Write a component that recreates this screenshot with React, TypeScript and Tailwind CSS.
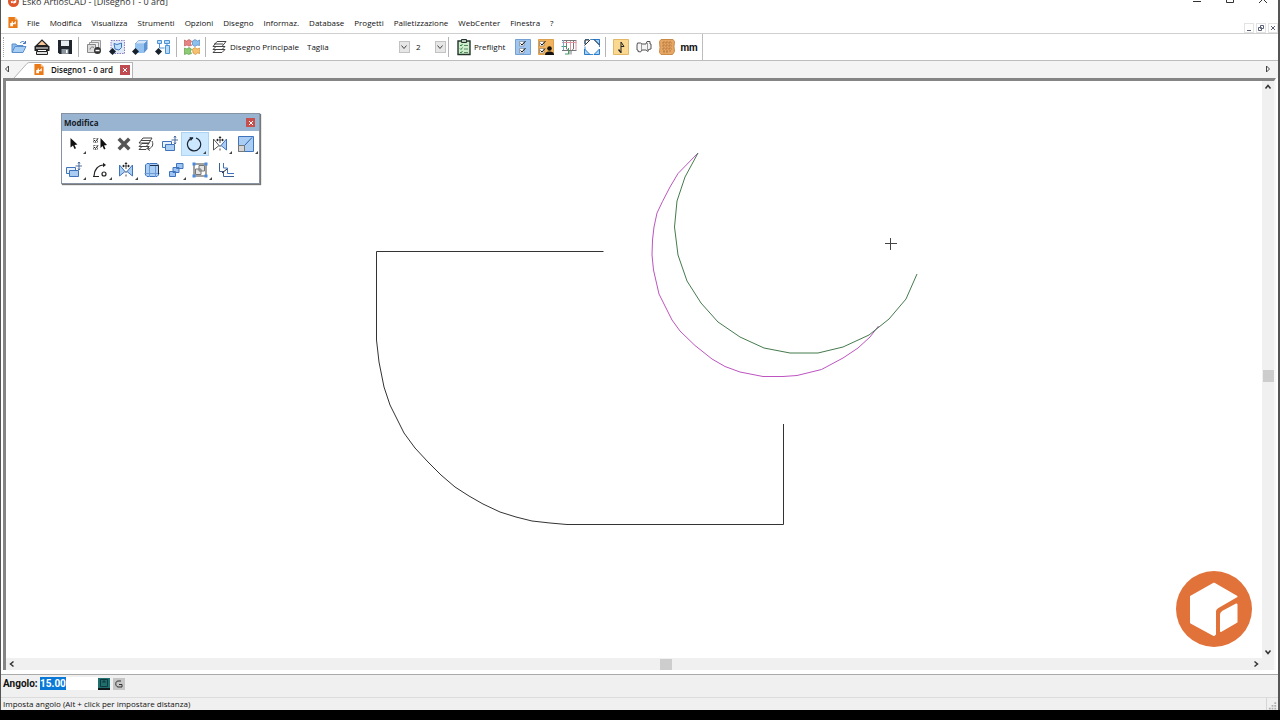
import { useEffect, useRef, type ReactNode } from "react";

function Icon({ children, className = "size-4" }: { children: ReactNode; className?: string }) {
  return (
    <svg viewBox="0 0 16 16" className={`${className} shrink-0 fill-none`} aria-hidden="true">
      {children}
    </svg>
  );
}

const BLUE = "#3f74bd";
const PALE = "#a9cdf3";

function AppMark({ className }: { className: string }) {
  return (
    <svg viewBox="0 0 10 12" className={className} aria-hidden="true">
      <path d="M0 0h7l3 3v9H0z" fill="#ea7a18" />
      <path d="M7 0l3 3H7z" fill="#f8c48f" />
      <path d="M2 6.500h1.500V5H5v1.500h1L8 4v4H6.500V6.800L5 8.500V10H2z" fill="#fff" />
    </svg>
  );
}

const icons = {
  open: (
    <>
      <path d="M1 13V5h4l1 1.500h6V8" fill="#8fbcea" stroke="#5a8fcb" />
      <path d="M1 13.500l3-6h11l-3 6z" fill="#a6cdf4" stroke="#5a8fcb" />
      <path d="M9 4c2-2 4-2 5 0m.5-2v2.500H12" stroke={BLUE} />
    </>
  ),
  print: (
    <>
      <path d="M2.500 6.500L8 1l5.500 5.500z" fill="#f7c79a" stroke="#222" strokeWidth="1.200" />
      <path d="M.5 7h15v5H.5z" fill="#222" />
      <path d="M2 9h12M4 11.500h8" stroke="#fff" />
      <path d="M2.500 12.500h11v3h-11z" fill="#ddd" stroke="#222" />
    </>
  ),
  save: (
    <>
      <path d="M1 1h14v14H2.500L1 13.500z" fill="#20262e" />
      <path d="M4 1.500h8V7H4z" fill="#e8edf2" />
      <path d="M4.500 10h7v5h-7z" fill="#8c96a0" />
      <path d="M9 11h1.500v3H9z" fill="#fff" />
    </>
  ),
  plotSet: (
    <>
      <path d="M5.500 1.500h9v8h-9z" fill="#e6e6e6" stroke="#999" />
      <path d="M3.500 3.500h9v8h-9z" fill="#eee" stroke="#999" />
      <path d="M1.500 5.500h8v8h-8z" fill="#ddd" stroke="#888" />
      <path d="M4 10.500a2.500 2.500 0 0 1 4-2" stroke="#777" />
      <circle cx="11.500" cy="11.500" r="3.500" fill="#333" />
      <path d="M9.500 11.500h4" stroke="#fff" strokeWidth="1.500" />
    </>
  ),
  copyDesign: (
    <>
      <path d="M2 1.500h13.500v13H2z" fill="#dfe9f8" stroke="#8a7fc0" strokeDasharray="1.500 1" />
      <path d="M5 4.500l3 1L12.500 4v4.500L10 11l-4-1z" fill="#bfe0fb" stroke={BLUE} />
      <path d="M3.500 9L7 12.500 3.500 16 0 12.500z" fill="#17202b" />
    </>
  ),
  cube: (
    <>
      <path d="M3 5l3.500-3.500H15.500L12 5z" fill="#d4e7fb" stroke="#6b9bd3" strokeWidth=".7" />
      <path d="M12 5l3.500-3.500V10L12 14z" fill="#5d93d1" />
      <path d="M3 5h9v9H3z" fill="#94c2f0" />
      <path d="M3.500 9L7 12.500 3.500 16 0 12.500z" fill="#17202b" />
    </>
  ),
  hierarchy: (
    <>
      <path d="M2.500 1.500h4v3h-4zM9.500 1.500h5v3h-5zM10.500 6.500h4v8h-4z" fill="#b8dafa" stroke="#4c93d6" />
      <path d="M4.500 5v4h5M12 5v2" stroke="#4c93d6" />
      <path d="M3.500 9L7 12.500 3.500 16 0 12.500z" fill="#17202b" />
    </>
  ),
  puzzle: (
    <>
      <path d="M0 1l2.500 1L5 .5 7.500 2 6.500 4.500l1 2-3 .5L3 6 .5 7z" fill="#e58484" stroke="#b84d4d" strokeWidth=".6" />
      <path d="M8.500 2L11 .5l2.500 1.500L16 1l-.5 5.500L13 6l-2 1.500L8.500 6z" fill="#8ec0ee" stroke="#4077b3" strokeWidth=".6" />
      <path d="M.5 9L3 10l2-1.500L7.500 10l-1 2.500 1 2-3 1L3 14.500.5 15.500z" fill="#8dcb74" stroke="#4d8f39" strokeWidth=".6" />
      <path d="M8.500 10l2.500-1.500 2 1.500 2.500-1 .5 5.500-2.500-.5-2 1.500-2.500-1.500z" fill="#f6c170" stroke="#c78123" strokeWidth=".6" />
    </>
  ),
  layers: (
    <g fill="#fff" stroke="#444">
      <path d="M2 13.500l3-3h9l-3 3zM2 10.500l3-3h9l-3 3zM2 7.500l4-5h9l-4 5z" />
      <path d="M3 5h9" />
    </g>
  ),
  preflight: (
    <>
      <path d="M2 2h12v13.500H2z" fill="#cfeccd" stroke="#23352a" strokeWidth="1.400" />
      <path d="M5.500.5h5v3h-5z" fill="#b9c9bd" stroke="#23352a" />
      <path d="M4 6l1 1 1.500-2M4 9.500l1 1L6.500 8.500M4 13l1 1 1.500-2" stroke="#2c8a44" />
      <path d="M8 6.500h4M8 10h4M8 13.500h4" stroke="#5a8a64" />
    </>
  ),
  checks: (
    <>
      <path d="M.5.5h15v15H.5z" fill="#9fc5f1" stroke="#75a0d3" />
      <path d="M4.500 2.500H9V7H4.500zM4.500 9.500H9V14H4.500z" fill="#fff" stroke="#7b8794" strokeWidth=".7" />
      <path d="M5.500 4.500l1.500 1.500 3.500-4M5.500 11.500L7 13l3.500-4" stroke="#111" />
    </>
  ),
  userChecks: (
    <>
      <path d="M.5.5h15v15H.5z" fill="#f2b35e" stroke="#dda04d" />
      <path d="M1.500 2.500H6V7H1.500zM1.500 9.500H6V14H1.500z" fill="#fff" stroke="#8d7a5c" strokeWidth=".7" />
      <path d="M2.500 4.500L4 6l3.500-4M2.500 11.500L4 13l3-3.500" stroke="#111" />
      <circle cx="11.500" cy="9.500" r="2.300" fill="#111" />
      <path d="M7 16c0-3 2.500-3.500 4.500-3.500s4.500.5 4.500 3.500z" fill="#111" />
    </>
  ),
  grid: (
    <>
      <path d="M1 1.500h14.500M5.500 1v9L8 12v3.500M12.500 1v9L10 12v3.500M1 11.500h14.500" stroke="#777" />
      <path d="M1 3.500h14.500M9.500 2v9M15 2v9" stroke="#dc96a2" />
      <path d="M.5 7.500h5M7.500 9v6H4" stroke="#3f9f67" />
      <path d="M2.500 1v10" stroke="#7ba6d8" />
    </>
  ),
  fit: (
    <>
      <path d="M1 .5h14.500v15H1z" stroke="#3b8ad8" strokeDasharray="4 2" />
      <path d="M10 .5h5.500V6zM.5 10v5.500H6zM15.500 10v5.500H10z" fill="#a8d3fa" stroke="#2d7bc8" />
      <path d="M.5 6.500l6-6M1 1h4M1 1v4M10 .5L15.500 6" stroke="#333" />
    </>
  ),
  note: (
    <>
      <path d="M.5.5h15v15H.5z" fill="#fbd890" stroke="#e2b765" />
      <path d="M8 14V3l3 4.500H8" stroke="#222" />
      <path d="M5.500 10.500L8 13.500" stroke="#222" strokeWidth="1.400" />
    </>
  ),
  carton: (
    <>
      <path d="M1.500 4h3L6 5h4l1-2.500h3V5h1v5l-2.500.5-.5 2-2-1.500H6L4.500 13 2 12.500V11H1V6z" stroke="#555" fill="#f6f6f6" />
      <path d="M5.500 5v6M11.500 4v7" stroke="#999" />
    </>
  ),
  board: (
    <>
      <path d="M2 .5h12l1.500 2-.5 5 .5 5-2 3H2l-1.500-2 .5-5-.5-6z" fill="#e5a763" stroke="#c98a48" />
      <path d="M3 4h10M3 7h10M3 10h10M4 13h6M5 2v11M8 2v11M11 2v11" stroke="#a96b35" strokeWidth=".7" strokeDasharray="2 1" />
    </>
  ),
  arrow: <path d="M4.500 2v9.500L7 9.500 8.500 13l1.500-.8-1.500-3.200 3-.5z" fill="#111" />,
  selectList: (
    <>
      <path d="M1.500 2.500h4v4h-4zM1.500 9.500h4v4h-4z" stroke="#777" strokeDasharray="2 1" />
      <path d="M2 4l1.500 1.500L6 2.500M2 11l1.500 1.500L6 9.500" stroke="#222" />
      <path d="M8.500 2v10l2-2 1.500 3.500 1.500-.7L12 9.500l3-.5z" fill="#111" />
    </>
  ),
  cross: <path d="M4 1.500L8 5.500l4-4L14.500 4l-4 4 4 4-2.500 2.500-4-4-4 4L1.500 12l4-4-4-4z" fill="#555" />,
  layerEdit: (
    <>
      <g fill="#fff" stroke="#444">
        <path d="M1 13.500l3-3h7l-3 3zM1 10.500l3-3h7l-3 3zM1 7l4-5h9l-3 5z" />
        <path d="M3 4.500h9" />
      </g>
      <path d="M14 5c2 4 0 7-4 8M11 10.500L9.500 13l2.500 1.500" stroke="#444" />
    </>
  ),
  move: (
    <>
      <path d="M.5 5.500h9v6h-9z" fill="#e8f1fc" stroke={BLUE} />
      <path d="M3.500 8.500h9v6h-9z" fill={PALE} stroke={BLUE} />
      <path d="M13 0v8M9.500 4H16M12 1.500L13 0l1 1.500M12 6.500L13 8l1-1.500" stroke="#3b5f96" strokeWidth=".9" />
    </>
  ),
  rotate: (
    <>
      <path d="M7 1.800A6.600 6.600 0 1 0 10 2" stroke="#1c2430" strokeWidth="1.200" />
      <path d="M3.500 1l4 .8L4.800 5z" fill="#1c2430" />
    </>
  ),
  mirror: (
    <>
      <path d="M1.500 3v11L7 9.500zM14.500 3v11L9 9.500z" fill={PALE} stroke={BLUE} />
      <path d="M8 1v6M5 4h6M8 9v2M8 12.500v2" stroke="#222" strokeWidth=".8" />
      <path d="M8 0L6.500 2h3zM4 4l2-1.500v3zM12 4l-2-1.500v3z" fill="#222" />
    </>
  ),
  mirrorWhite: (
    <>
      <path d="M1.500 3v11L7 9.500z" fill="#fff" stroke="#555" />
      <path d="M14.500 3v11L9 9.500z" fill={PALE} stroke={BLUE} />
      <path d="M8 1v6M5 4h6M8 9v2M8 12.500v2" stroke="#222" strokeWidth=".8" />
      <path d="M8 0L6.500 2h3zM4 4l2-1.500v3zM12 4l-2-1.500v3z" fill="#222" />
    </>
  ),
  scale: (
    <>
      <path d="M.5.5h15v15H.5z" fill={PALE} stroke={BLUE} />
      <path d="M.5 9.500h6v6h-6z" fill="#d4d4d4" stroke="#777" />
      <path d="M6.500 9.500l7.500-8" stroke="#2f65b0" />
    </>
  ),
  arc: (
    <>
      <path d="M2 14C2 8 6 3 12 3" stroke="#222" strokeWidth="1.200" />
      <path d="M11 .8L14 3l-3 2.200z" fill="#222" />
      <circle cx="12" cy="12" r="2" stroke="#222" strokeWidth="1.200" />
      <path d="M1 14.500h6" stroke="#222" />
    </>
  ),
  trim: (
    <>
      <path d="M3 1.500h10L14.500 3v10L13 14.500H3L1.500 13V3z" fill={PALE} stroke={BLUE} />
      <path d="M5.500 1v14M11.500 4v11M.5 11.500h15" stroke="#6d9bd6" />
      <path d="M6 3.500h8.500V12" stroke="#20304c" />
    </>
  ),
  copies: (
    <g fill="#9cc5f3" stroke={BLUE}>
      <path d="M8.500 1.500H15v5H8.500zM5 5.500h6v5H5zM1.500 9.500h6v5h-6z" />
    </g>
  ),
  group: (
    <>
      <path d="M2 2h12v12H2z" stroke="#444" />
      <path d="M7 3.500h5.500V9H7zM3.500 7H9v5.500H3.500z" fill="#e4e4e4" stroke="#777" />
      <path d="M.5.5h3v3h-3zM12.500.5h3v3h-3zM.5 12.500h3v3h-3zM12.500 12.500h3v3h-3z" fill="#4a8ae0" />
    </>
  ),
  offset: (
    <>
      <path d="M1.500 1v8.500h4v5H16" stroke="#3c5f94" />
      <path d="M5.500 1v5h4v5.500H16" stroke={BLUE} />
      <path d="M4 11l5-4" stroke="#222" />
    </>
  ),
};

type IconName = keyof typeof icons;

function Tool({ name, label }: { name: IconName; label: string }) {
  return (
    <button type="button" aria-label={label} className="flex h-6 w-[23px] shrink-0 items-center justify-center">
      <Icon>{icons[name]}</Icon>
    </button>
  );
}

function Separator() {
  return <div className="mx-0.5 h-5 w-0.5 shrink-0 border-l border-[#b4b4b4]" />;
}

function Combo({ label, value, className }: { label: string; value: string; className: string }) {
  return (
    <div className={`relative flex h-4 items-center ${className}`}>
      <select aria-label={label} defaultValue={value} className="h-4 w-full appearance-none bg-white text-[8px] leading-4 outline-none">
        <option>{value}</option>
      </select>
      <span className="pointer-events-none absolute right-0 flex h-3 w-[11px] items-center justify-center border border-[#c2c2c2] bg-[#e6e6e6]">
        <svg viewBox="0 0 8 8" className="size-2 fill-none stroke-[#444]" aria-hidden="true">
          <path d="M1.500 2.500L4 5.500l2.500-3" />
        </svg>
      </span>
    </div>
  );
}

const menus = ["File", "Modifica", "Visualizza", "Strumenti", "Opzioni", "Disegno", "Informaz.", "Database", "Progetti", "Palletizzazione", "WebCenter", "Finestra", "?"];

type PaletteTool = { name: IconName; label: string; more?: boolean; active?: boolean; width: string };

const paletteRows: PaletteTool[][] = [
  [
    { name: "arrow", label: "Seleziona", more: true, width: "w-[26px]" },
    { name: "selectList", label: "Selezione multipla", width: "w-[24px]" },
    { name: "cross", label: "Elimina", width: "w-[22px]" },
    { name: "layerEdit", label: "Livelli", width: "w-[24px]" },
    { name: "move", label: "Sposta", width: "w-[24px]" },
    { name: "rotate", label: "Ruota", more: true, active: true, width: "w-[26px]" },
    { name: "mirrorWhite", label: "Specchio", more: true, width: "w-[26px]" },
    { name: "scale", label: "Scala", more: true, width: "w-[26px]" },
  ],
  [
    { name: "move", label: "Copia e sposta", more: true, width: "w-[26px]" },
    { name: "arc", label: "Copia e ruota", more: true, width: "w-[26px]" },
    { name: "mirror", label: "Copia e specchia", more: true, width: "w-[26px]" },
    { name: "trim", label: "Ritaglia", width: "w-[24px]" },
    { name: "copies", label: "Copie multiple", more: true, width: "w-[24px]" },
    { name: "group", label: "Gruppo", more: true, width: "w-[26px]" },
    { name: "offset", label: "Offset", width: "w-[26px]" },
  ],
];

function Palette() {
  return (
    <section aria-label="Modifica" className="absolute left-[55px] top-8 w-[199px] border border-[#8793a3] bg-white shadow-[1px_1px_1px_#777]">
      <header className="flex h-[17px] items-center justify-between bg-[#99b4d1] pl-0.5 pr-1">
        <h2 className="text-[8px] font-bold leading-4 text-[#141c28]">Modifica</h2>
        <button type="button" aria-label="Chiudi Modifica" className="flex size-[9px] items-center justify-center bg-[#c7504f]">
          <svg viewBox="0 0 8 8" className="size-2 stroke-white" aria-hidden="true">
            <path d="M2 2l4 4M6 2L2 6" />
          </svg>
        </button>
      </header>
      {paletteRows.map((row, i) => (
        <div key={i} className="flex h-[26px] items-center">
          {row.map((t) => (
            <button
              key={t.label}
              type="button"
              aria-label={t.label}
              className={`relative flex h-[22px] shrink-0 items-center pl-1 ${t.width} ${t.active ? "bg-[#cce8ff] outline outline-[#a9d4f5]" : ""}`}
            >
              <Icon>{icons[t.name]}</Icon>
              {t.more && (
                <svg viewBox="0 0 4 4" className="absolute bottom-px right-0.5 size-[3px] fill-[#444]" aria-hidden="true">
                  <path d="M4 0v4H0z" />
                </svg>
              )}
            </button>
          ))}
        </div>
      ))}
    </section>
  );
}

function Drawing() {
  return (
    <svg className="absolute inset-0 size-full fill-none" role="img" aria-label="Disegno1">
      <g transform="translate(-6 -81)">
        <path
          d="M603.500 251.500H376.500V340L379 362 384 387 390 405 398 421 404 433 415 448 428 462 441 475 455 487 469 496 483 504 500 512 516 517 532 521 550 523 567 524.500H783.500V424"
          stroke="#333"
        />
        <path
          d="M698 153L678 173.500 670 187 662.500 201.500 657 213 654 227 652.500 240 652 255 653.500 270 659 294 672 320 680 331 695 345.500 712 359 725 366.500 740 372 763 376.500 783 376.500 797 375.500 821.500 369.500 843 358 858 348 870 337 878.500 326"
          stroke="#bd54c0"
        />
        <path
          d="M698 153l-13 24-8 24-2.500 26 3.500 28 9 26 14 22 17 19 22 15 24 11 26 5h28l25-6 26-12 20-16 17-20 11-25"
          stroke="#457a4d"
        />
        <path d="M885 243.500h12M890.500 238v12" stroke="#444" />
      </g>
    </svg>
  );
}

function Logo() {
  return (
    <svg viewBox="0 0 76 76" className="absolute bottom-[11px] right-2.5 size-[76px]" role="img" aria-label="Logo">
      <circle cx="38" cy="38" r="38" fill="#e0723a" />
      <g fill="#fff" stroke="#fff" strokeWidth="2" strokeLinejoin="round">
        <path d="M38 12.700L60.500 25.500 41.500 36.500q-2.500 1.500-2.500 4V63L38 64 15 51.500V25.500z" />
        <path d="M60.500 33.500v17.500L45 60V43.500q0-1.500 1.500-2.500z" />
      </g>
    </svg>
  );
}

const chevron = "size-2 fill-none stroke-[#333] stroke-[1.5]";

export default function App() {
  const angle = useRef<HTMLInputElement>(null);
  useEffect(() => {
    angle.current?.focus();
    angle.current?.select();
  }, []);

  return (
    <div className="flex h-screen flex-col bg-black font-['Open_Sans','Noto_Sans',sans-serif] text-[8px] text-[#111]">
      <div className="flex min-h-0 flex-1 flex-col border-l border-r-2 border-[#555] bg-white">
        <header className="flex h-3 shrink-0 items-start justify-between overflow-hidden pl-[7px]">
          <div className="-mt-1 flex items-start gap-[3px]">
            <svg viewBox="0 0 12 12" className="size-[11px]" aria-hidden="true">
              <circle cx="6" cy="6" r="6" fill="#e0562b" />
              <path d="M3 6l2-1v1.500L9 4v3L6 8.500V7L3.500 8z" fill="#fff" />
            </svg>
            <h1 className="text-[9px] leading-3 text-[#333]">Esko ArtiosCAD - [Disegno1 - 0 ard]</h1>
          </div>
          <div className="-mt-[5px] flex items-start gap-[21px] pr-[9px]">
            {["M2 6.500h8", "M2.500.500h7v7h-7z", "M2 0l8 8M10 0L2 8"].map((d, i) => (
              <button key={d} type="button" aria-label={["Riduci", "Ingrandisci", "Chiudi"][i]} className="flex">
                <svg viewBox="0 0 12 9" className="h-[9px] w-3 fill-none stroke-[#333]" aria-hidden="true">
                  <path d={d} />
                </svg>
              </button>
            ))}
          </div>
        </header>

        <nav className="flex h-[22px] shrink-0 items-center justify-between border-b border-[#cfcfcf] pl-[7px]">
          <div className="flex items-center">
            <AppMark className="h-[11px] w-2.5" />
            <div className="flex gap-2.5 pl-[9px]">
              {menus.map((m) => (
                <button key={m} type="button" className="leading-4">
                  {m}
                </button>
              ))}
            </div>
          </div>
          <div className="flex gap-0.5 self-end">
            {["M2 6.500h4", "M3.500 1.500h3v3h-3zM1.500 3.500h3v3h-3z", "M2 2l4 4M6 2L2 6"].map((d, i) => (
              <button key={d} type="button" aria-label={["Riduci finestra", "Ripristina finestra", "Chiudi finestra"][i]} className="flex size-[10px] items-center justify-center border border-[#e3e3e3]">
                <svg viewBox="0 0 8 8" className="size-2 fill-none stroke-[#596075]" aria-hidden="true">
                  <path d={d} />
                </svg>
              </button>
            ))}
          </div>
        </nav>

        <div className="flex h-[27px] shrink-0 border-b border-[#bdbdbd]">
          <div role="toolbar" aria-label="Strumenti" className="flex items-center border-r border-[#bdbdbd] pl-0.5 pr-0.5">
            <div className="mr-0.5 h-5 w-0.5 border-l border-dotted border-[#a9a9a9]" />
            <Tool name="open" label="Apri" />
            <Tool name="print" label="Stampa" />
            <Tool name="save" label="Salva" />
            <Separator />
            <Tool name="plotSet" label="Output" />
            <Tool name="copyDesign" label="Copia in disegno" />
            <Tool name="cube" label="Converti in 3D" />
            <Tool name="hierarchy" label="Struttura" />
            <Separator />
            <Tool name="puzzle" label="Layout" />
            <Separator />
            <button type="button" className="ml-0.5 flex h-6 items-center gap-[3px]">
              <Icon>{icons.layers}</Icon>
              <span>Disegno Principale</span>
            </button>
            <Combo label="Tipo linea" value="Taglia" className="ml-2 w-[103px]" />
            <Combo label="Spessore" value="2" className="ml-1.5 w-[30px]" />
            <Separator />
            <button type="button" className="ml-1 flex h-6 items-center gap-0.5">
              <Icon className="h-[18px] w-4">{icons.preflight}</Icon>
              <span>Preflight</span>
            </button>
            <div className="w-1.5" />
            <Tool name="checks" label="Controlli" />
            <Tool name="userChecks" label="Controlli utente" />
            <Tool name="grid" label="Quote" />
            <Tool name="fit" label="Adatta" />
            <Separator />
            <Tool name="note" label="Direzione fibra" />
            <Tool name="carton" label="Contorno" />
            <Tool name="board" label="Cartone" />
            <button type="button" aria-label="Unità: mm" className="mx-0.5 font-[Roboto,sans-serif] text-[10px] font-bold">
              mm
            </button>
          </div>
        </div>

        <div className="flex h-[17px] shrink-0 items-center justify-between bg-[#f4f4f4] pl-[3px] pr-0.5">
          <div className="flex h-full items-center">
            <button type="button" aria-label="Scheda precedente" className="pb-0.5">
              <svg viewBox="0 0 8 8" className="size-2 fill-none stroke-[#444]" aria-hidden="true">
                <path d="M4.500 1v6L1.500 4z" />
              </svg>
            </button>
            <div className="flex h-full items-end pl-0.5">
              <svg viewBox="0 0 16 16" className="size-4" aria-hidden="true">
                <path d="M0 16L13 1.500Q14 .5 16 .5V16" fill="#fff" />
                <path d="M0 16L13 1.500Q14 .5 16 .5" fill="none" stroke="#b5b5b5" />
              </svg>
              <div className="flex h-4 items-center border-r border-t border-[#b5b5b5] bg-white pb-0.5 pl-1">
                <AppMark className="h-[11px] w-2.5" />
                <button type="button" className="px-[7px] font-semibold leading-[13px]">Disegno1 - 0 ard</button>
                <button type="button" aria-label="Chiudi scheda" className="mr-0.5 flex size-[10px] items-center justify-center bg-[#bf4b50]">
                  <svg viewBox="0 0 8 8" className="size-2 stroke-white" aria-hidden="true">
                    <path d="M2 2l4 4M6 2L2 6" />
                  </svg>
                </button>
              </div>
            </div>
          </div>
          <button type="button" aria-label="Scheda successiva" className="pb-0.5 pr-1">
            <svg viewBox="0 0 8 8" className="size-2 fill-none stroke-[#444]" aria-hidden="true">
              <path d="M2.500 1v6l3-3z" />
            </svg>
          </button>
        </div>

        <main className="mx-0.5 flex min-h-0 flex-1 flex-col border-l-[3px] border-r-2 border-t-[3px] border-l-[#858585] border-r-[#f8f8f8] border-t-[#858585]">
          <div className="flex min-h-0 flex-1">
            <div className="relative min-w-0 flex-1 overflow-hidden bg-white">
              <Drawing />
              <Palette />
              <Logo />
            </div>
            <div className="flex w-3 shrink-0 flex-col items-center justify-between bg-[#f0f0f0] py-0.5">
              <button type="button" aria-label="Scorri in alto">
                <svg viewBox="0 0 8 8" className={chevron} aria-hidden="true"><path d="M1.500 5.500L4 2.500l2.500 3" /></svg>
              </button>
              <div className="mt-3 h-3 w-[11px] bg-[#cdcdcd]" />
              <button type="button" aria-label="Scorri in basso">
                <svg viewBox="0 0 8 8" className={chevron} aria-hidden="true"><path d="M1.500 2.500L4 5.500l2.500-3" /></svg>
              </button>
            </div>
          </div>
          <div className="flex h-3 shrink-0 items-center justify-between bg-[#f0f0f0] pl-0.5 pr-[14px]">
            <button type="button" aria-label="Scorri a sinistra">
              <svg viewBox="0 0 8 8" className={chevron} aria-hidden="true"><path d="M5.500 1.500L2.500 4l3 2.500" /></svg>
            </button>
            <div className="ml-16 h-[11px] w-3 bg-[#cdcdcd]" />
            <button type="button" aria-label="Scorri a destra">
              <svg viewBox="0 0 8 8" className={chevron} aria-hidden="true"><path d="M2.500 1.500L5.500 4l-3 2.500" /></svg>
            </button>
          </div>
        </main>

        <form className="mt-1 flex h-[23px] shrink-0 items-start border-t border-[#a9a9a9] bg-[#f0f0f0] pl-0.5 pt-0.5" onSubmit={(e) => e.preventDefault()}>
          <label htmlFor="angle" className="w-[37px] font-[Roboto,sans-serif] text-[10px] font-bold leading-[14px]">Angolo:</label>
          <input
            id="angle"
            ref={angle}
            defaultValue="15.00"
            className="h-[13px] w-[58px] bg-white font-[Roboto,sans-serif] text-[10px] font-bold leading-[13px] outline-none selection:bg-[#0a78d7] selection:text-white"
          />
          <button type="button" aria-label="Calcolatrice" className="mt-px flex h-3 w-3 items-center justify-center border-b-2 border-[#12191b] bg-[#1e6f6d]">
            <svg viewBox="0 0 10 10" className="size-2.5 fill-none stroke-[#12393d]" aria-hidden="true">
              <path d="M1.500 1.500h7v7h-7zM3 4h4M5 1v3" />
            </svg>
          </button>
          <button type="button" aria-label="Ripristina" className="ml-[3px] mt-px flex size-3 items-center justify-center bg-[#c6c6c6]">
            <svg viewBox="0 0 10 10" className="size-2.5 fill-none stroke-[#333]" aria-hidden="true">
              <path d="M7 2H4C1 2 1 7.500 4 8h4V5.500H5" />
            </svg>
          </button>
        </form>

        <footer className="flex h-[13px] shrink-0 items-center justify-between border-t border-[#dcdcdc] bg-[#f0f0f0] pl-0.5">
          <p className="leading-3">Imposta angolo (Alt + click per impostare distanza)</p>
          <svg viewBox="0 0 12 12" className="h-3 w-3 border-l border-[#d5d5d5]" fill="#b0b0b0" aria-hidden="true">
            <path d="M8 4h2v2H8zM5 7h2v2H5zM8 7h2v2H8zM2 10h2v2H2zM5 10h2v2H5zM8 10h2v2H8z" />
          </svg>
        </footer>
      </div>
      <div className="h-2.5 shrink-0" />
    </div>
  );
}
